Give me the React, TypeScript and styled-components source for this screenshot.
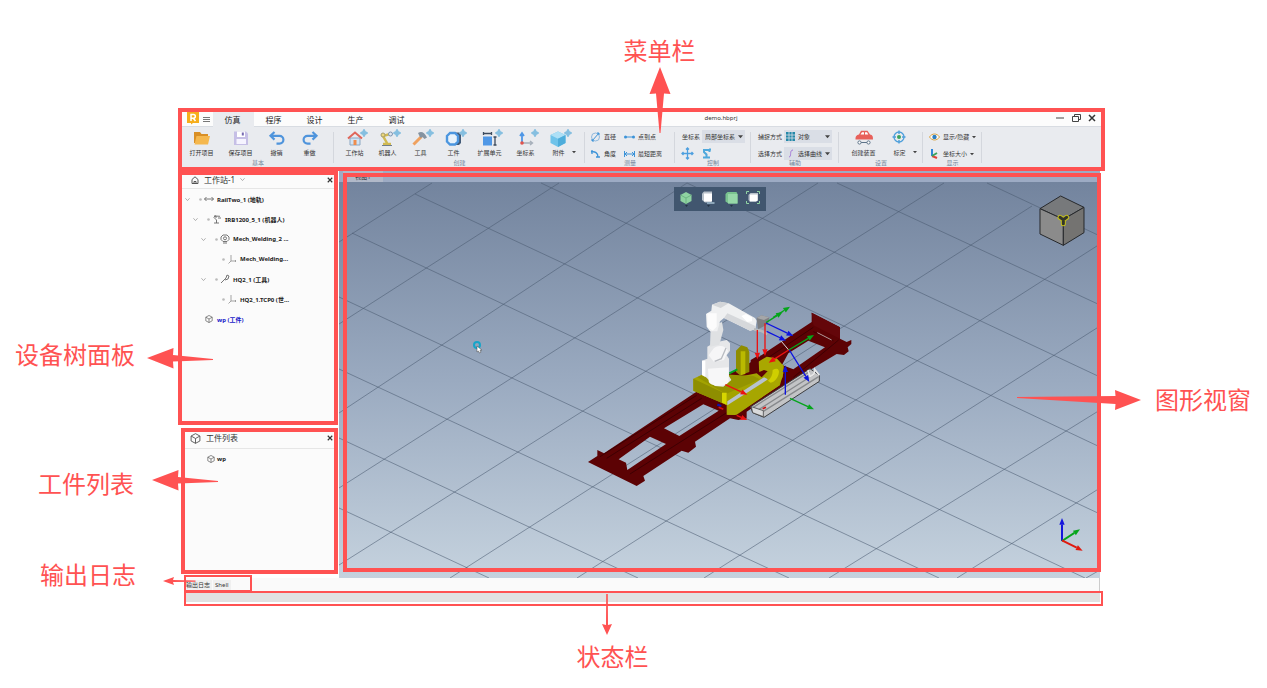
import React from "react";
import styled, { createGlobalStyle } from "styled-components";

const RED = "#ff5252";

const GlobalStyle = createGlobalStyle`
  * { box-sizing: border-box; }
  body {
    margin: 0;
    background: #fff;
    font-family: "Noto Sans", "Noto Sans CJK SC", sans-serif;
    color: #333;
  }
  button, select { font: inherit; color: inherit; border: 0; background: none; padding: 0; margin: 0; }
  svg { display: block; flex: none; overflow: visible; }
`;

/* ---------- page and callouts ---------- */

const Page = styled.main`
  display: grid;
  grid-template-columns: 178px minmax(0, 1fr) 162px;
  min-height: 100vh;
`;

const Notes = styled.aside`
  position: relative;
  z-index: 3;
  display: flex;
  flex-direction: column;
`;

const NoteText = styled.span`
  font-size: 24px;
  line-height: 32px;
  color: ${RED};
  white-space: nowrap;
`;

const Note = styled.div<{ $top: number; $left: number; $gap: number }>`
  display: flex;
  align-items: center;
  gap: ${(p) => p.$gap}px;
  margin-top: ${(p) => p.$top}px;
  margin-left: ${(p) => p.$left}px;
`;

const TopNote = styled.div`
  position: relative;
  z-index: 3;
  height: 108px;
  padding: 35px 0 0 36px;
  display: flex;
  flex-direction: column;
  align-items: center;
`;

const BottomNote = styled.div`
  position: relative;
  z-index: 3;
  margin-top: -12px;
  padding-right: 58px;
  display: flex;
  flex-direction: column;
  align-items: center;
  gap: 6px;

  svg { margin-right: 12px; }
`;

const Column = styled.div`
  display: flex;
  flex-direction: column;
  min-width: 0;
`;

/* ---------- ribbon ---------- */

const Ribbon = styled.header`
  position: relative;
  z-index: 2;
  border: 4px solid ${RED};
  background: #e9ebef;
`;

const TitleBar = styled.div`
  display: flex;
  align-items: stretch;
  height: 15px;
  padding-left: 5px;
  background: #fcfcfc;
  border-bottom: 1px solid #d8dce2;
`;

const MenuButton = styled.button`
  display: grid;
  place-items: center;
  width: 14px;
  padding-top: 2px;
`;

const Tabs = styled.nav`
  display: flex;
  margin-bottom: -1px;
`;

const Tab = styled.button<{ $active?: boolean }>`
  width: 41px;
  font-size: 8px;
  line-height: 14px;
  padding: 1px 2px 0 0;
  color: #222;
  background: ${(p) => (p.$active ? "#e9ebef" : "transparent")};
`;

const DocTitle = styled.div`
  flex: 1;
  padding-right: 28px;
  text-align: center;
  font-size: 6px;
  line-height: 13px;
`;

const WindowButtons = styled.div`
  display: flex;
  margin-right: 1px;

  button { width: 16px; display: grid; place-items: center; padding-bottom: 2px; }
`;

const Groups = styled.div`
  display: flex;
  height: 40px;
`;

const Group = styled.section<{ $w: number }>`
  position: relative;
  width: ${(p) => p.$w}px;
  flex: none;
  display: flex;
  flex-direction: column;

  &::after {
    content: "";
    position: absolute;
    right: 0;
    top: 5px;
    bottom: 4px;
    width: 1px;
    background: #d4d7dd;
  }
`;

const Tools = styled.div<{ $pad?: number }>`
  display: flex;
  height: 32px;
  padding-left: ${(p) => p.$pad ?? 0}px;
`;

const Caption = styled.h2`
  margin: 0;
  font-size: 6px;
  line-height: 8px;
  font-weight: 400;
  text-align: center;
  color: #75879c;
`;

const BigTool = styled.button<{ $wide?: boolean }>`
  width: ${(p) => (p.$wide ? 39 : 33)}px;
  display: flex;
  flex-direction: column;
  align-items: center;
  gap: 2px;
  padding-top: 3px;
  font-size: 6px;
  line-height: 8px;
  white-space: nowrap;
`;

const CaretButton = styled.button`
  align-self: flex-end;
  width: 6px;
  height: 14px;
  margin-left: -4px;
  display: grid;
  place-items: center;
`;

const Lines = styled.div<{ $cols: string; $pad: number }>`
  display: grid;
  grid-template-columns: ${(p) => p.$cols};
  grid-template-rows: 13px 13px;
  row-gap: 4px;
  height: 32px;
  padding: 3px 0 0 ${(p) => p.$pad}px;
  align-items: center;
`;

const SmallTool = styled.button`
  display: flex;
  align-items: center;
  gap: 3px;
  font-size: 6px;
  line-height: 12px;
  white-space: nowrap;
`;

const FieldLabel = styled.label`
  font-size: 6px;
  line-height: 12px;
  white-space: nowrap;
`;

const Field = styled.div`
  position: relative;
  display: flex;
  align-items: center;
  height: 13px;
  background: #dadee6;

  > svg { position: absolute; pointer-events: none; }
  > svg:first-child { left: 2px; }
  > svg:last-child { right: 2px; }
`;

const Select = styled.select<{ $icon?: boolean }>`
  appearance: none;
  width: 100%;
  height: 13px;
  padding-left: ${(p) => (p.$icon ? 14 : 3)}px;
  font-size: 6px;
  line-height: 12px;
`;

/* ---------- work area ---------- */

const Work = styled.div`
  display: flex;
  padding-right: 5px;
`;

const Sidebar = styled.div`
  width: 161px;
  flex: none;
  padding-right: 1px;
  padding-bottom: 4px;
  display: flex;
  flex-direction: column;
  gap: 3px;
`;

const Panel = styled.section<{ $h: number; $inset?: boolean }>`
  border: 4px solid ${RED};
  background: #fbfbfb;
  min-height: ${(p) => p.$h}px;
  margin-left: ${(p) => (p.$inset ? 3 : 0)}px;
`;

const PanelHead = styled.div<{ $h: number; $pad: number }>`
  display: flex;
  align-items: center;
  gap: 5px;
  height: ${(p) => p.$h}px;
  padding: 0 1px 4px ${(p) => p.$pad}px;
  border-bottom: 1px solid #e6e6e6;
  font-size: 8px;
  line-height: 10px;

  h2 { margin: 0; font: inherit; }
  button:last-child { margin-left: auto; }
`;

const Tree = styled.ul`
  list-style: none;
  margin: 0;
  padding: 0;
`;

const Row = styled.li<{ $level: number; $link?: boolean }>`
  display: flex;
  align-items: center;
  height: 20px;
  padding-left: ${(p) => 1 + p.$level * 8}px;
  font-size: 6px;
  font-weight: 700;
  white-space: nowrap;
  color: ${(p) => (p.$link ? "#1616c8" : "#222")};
`;

const Slot = styled.span<{ $w: number; $gap?: number }>`
  width: ${(p) => p.$w}px;
  margin-right: ${(p) => p.$gap ?? 0}px;
  flex: none;
  display: grid;
  place-items: center;
`;

const ListRow = styled(Row)`
  padding-left: 19px;
`;

const Viewport = styled.section`
  position: relative;
  flex: 1;
  min-width: 0;
  display: flex;
  flex-direction: column;
`;

const ViewTabs = styled.div`
  height: 11px;
  background: #9dabc4;
  padding-left: 4px;
`;

const ViewTab = styled.button`
  width: 40px;
  height: 11px;
  background: #b1b9c9;
  font-size: 6px;
  line-height: 12px;
  display: block;
`;

const Scene = styled.div`
  position: relative;
  flex: 1;
  overflow: hidden;
  background: linear-gradient(#73849e, #9aaac0 50%, #c5d2de);

  > svg { position: absolute; inset: 0; width: 100%; height: 100%; }
`;

const ViewTools = styled.div`
  position: absolute;
  top: 5px;
  left: 50%;
  margin-left: -46px;
  width: 92px;
  height: 24px;
  padding: 0 1px;
  display: flex;
  background: #41566f;

  button { flex: 1; display: grid; place-items: center; }
`;

const ViewFrame = styled.div`
  position: absolute;
  top: 2px;
  left: 4px;
  right: -1px;
  bottom: 6px;
  border: 4px solid ${RED};
  pointer-events: none;
`;

const LogBar = styled.div`
  margin: 0 5px 0 6px;
  height: 13px;
  background: #fafafa;
  border-right: 1px solid #ccc;
`;

const LogTabs = styled.div`
  position: relative;
  width: 68px;
  height: 17px;
  top: -3px;
  border: 2px solid ${RED};
  display: flex;
  align-items: flex-end;
  gap: 1px;
`;

const LogTab = styled.button`
  height: 10px;
  padding: 0 2px 0 0;
  font-size: 6px;
  line-height: 8px;
  background: #f0f0f0;
  white-space: nowrap;

  & + & { padding: 0 2px; }
`;

const StatusBar = styled.footer`
  position: relative;
  margin: 0 2px 0 6px;
  height: 15px;
  border: 2px solid ${RED};
  background: #fff;

  &::before {
    content: "";
    display: block;
    height: 9px;
    margin-right: 1px;
    background: #e1e1e1;
  }
`;

/* ---------- small drawings ---------- */

const Caret = ({ size = 5 }: { size?: number }) => (
  <svg width={size} height={size} viewBox="0 0 6 6"><path d="M0 1.5h6L3 5z" fill="#444" /></svg>
);

const Chevron = () => (
  <svg width="5" height="5" viewBox="0 0 6 6"><path d="M.5 1.5 3 4.3l2.500-2.800" fill="none" stroke="#999" strokeWidth=".9" /></svg>
);

const Plus = () => <path d="M18 0c.4 2 1 2.600 3 3-2 .4-2.600 1-3 3-.4-2-1-2.600-3-3 2-.4 2.600-1 3-3z" fill="#86bfe0" stroke="#86bfe0" strokeWidth="1.800" strokeLinejoin="round" />;

type Name =
  | "folder" | "save" | "undo" | "redo" | "home" | "robot" | "hammer" | "part" | "ext" | "axis" | "box"
  | "car" | "target";

const shapes: Record<Name, React.ReactNode> = {
  folder: <><path d="M1 2h6l1.500 2H15V13H1z" fill="#d98f26" /><path d="M3.500 6H17l-2 8.500H1.500z" fill="#f5b84f" /></>,
  save: <><path d="M2 1.500h12l2 2V15H2z" fill="#c6bfe6" /><path d="M5 1.500h8v5.500H5z" fill="#fff" /><path d="M9.800 2.500h2v3h-2z" fill="#7568b0" /><path d="M4.500 9h9.500v5H4.500z" fill="#f6f4ff" /></>,
  undo: <path d="M6.500 2 2.500 5.800l4 3.800M2.500 5.800h9a3.900 3.900 0 0 1 0 7.800H8.500" fill="none" stroke="#4f94dc" strokeWidth="2.200" />,
  redo: <path d="m11.500 2 4 3.800-4 3.800M15.500 5.800h-9a3.900 3.900 0 0 0 0 7.800h3" fill="none" stroke="#4f94dc" strokeWidth="2.200" />,
  home: <><path d="M4 8h10v7H4z" fill="#cfe3f4" stroke="#8ba7c2" /><path d="M2 8.500 9 2.500l7 6" fill="none" stroke="#e0665a" strokeWidth="2" /><path d="M7.500 10h3v5h-3z" fill="#ef8d4c" /><Plus /></>,
  robot: <><path d="M4 14h8M8 13 4 6l7-2" fill="none" stroke="#d0ba52" strokeWidth="2.500" /><circle cx="4" cy="5" r="2" fill="#ead67a" stroke="#a59c70" /><circle cx="11.500" cy="4" r="2" fill="#dfe6ef" stroke="#7c93b1" /><path d="M3 15.500h10" stroke="#6f7d8c" /><Plus /></>,
  hammer: <><path d="m1.500 14.500 8-8" stroke="#efa15f" strokeWidth="3" /><path d="M6 3c3-2 6-1.500 9 4.500l-2.500 1.500-2-2-2 1z" fill="#8593a1" /><Plus /></>,
  part: <><path d="M8 2.500h6l2 2V13l-2 2H8z" fill="#435b78" /><path d="M5 3 2 6v5.500l3 3h5l3-3V6l-3-3z" fill="#e8f2fb" stroke="#4c96df" strokeWidth="2.400" /><Plus /></>,
  ext: <><path d="M2 6.500h9V15.500H2z" fill="#4f97e6" /><path d="M2 3.500h9M2.500 2v3M10.500 2v3M14 6.500v9M12.500 7h3M12.500 15h3" stroke="#3c4a5c" fill="none" strokeWidth="1.300" /><Plus /></>,
  axis: <><path d="M5 13V4M3 6l2-3 2 3" fill="none" stroke="#4f97e6" strokeWidth="1.800" /><path d="M5 13h10M13 11l2.500 2-2.500 2" fill="none" stroke="#a7b0bb" strokeWidth="1.400" /><circle cx="5" cy="13" r="1.800" fill="#e0534f" /><Plus /></>,
  box: <><path d="m8 1.500 7.500 3.500v8L8 17 .5 13V5z" fill="#6fc3ea" /><path d="m8 1.500 7.500 3.500L8 8.800.5 5z" fill="#aee0f6" /><path d="M8 8.800V17l7.500-4V5z" fill="#4eaddb" /><Plus /></>,
  car: <><path d="M.5 9.500c0-3.500 1-4.500 3.500-5L6 .8h6.500L15 4.500c2.500.5 3 1.500 3 5z" fill="#e8605a" /><path d="M5.500 4.500 7 2.200h2v2.300zM10 4.500V2.200h2l1.300 2.300z" fill="#fff" /><path d="M4 12.500h10" stroke="#5d7389" /><circle cx="4.500" cy="12.500" r="1.600" fill="#fff" stroke="#5d7389" /><circle cx="13.500" cy="12.500" r="1.600" fill="#fff" stroke="#5d7389" /></>,
  target: <><circle cx="8" cy="7" r="5" fill="none" stroke="#4d9fdb" strokeWidth="1.300" /><circle cx="8" cy="7" r="2" fill="#3aa35b" /><path d="M8 .5v3.500M8 10v3.500M1.500 7H5M11 7h3.500" stroke="#4d9fdb" strokeWidth="1.400" /></>,
};

const Icon = ({ name }: { name: Name }) => (
  <svg width="18" height="17" viewBox="0 0 18 17">{shapes[name]}</svg>
);

const Close = ({ size = 8 }: { size?: number }) => (
  <svg width={size} height={size} viewBox="0 0 8 8"><path d="m1 1 6 6M7 1 1 7" stroke="#333" strokeWidth="1.500" /></svg>
);

const CubeIcon = ({ size = 8 }: { size?: number }) => (
  <svg width={size} height={size} viewBox="0 0 12 12">
    <path d="m6 .7 4.800 2.600v5.400L6 11.300 1.200 8.700V3.300zM1.200 3.300 6 6l4.800-2.700M6 6v5.300" fill="none" stroke="#555" strokeWidth="1" />
  </svg>
);

const RowIcon = ({ kind }: { kind: string }) => (
  <svg width="10" height="10" viewBox="0 0 10 10" fill="none" stroke="#666" strokeWidth=".9">
    {kind === "rail" && <path d="M.5 5h9M2.500 3l-2 2 2 2M7.500 3l2 2-2 2" />}
    {kind === "robot" && <path d="M2 9h5M4.500 9V6L2 3.500 3 2l5 .3M6 4h3M2 2h2v2" />}
    {kind === "mech" && <><path d="M3 1h4l2 2v2.500l-2 2H3l-2-2V3zM3 9h4" /><circle cx="5" cy="4.300" r="1.500" /></>}
    {kind === "frame" && <path d="M4 1v6h5M4 7 1.500 9.500M8 6l1 1-1 1" stroke="#999" />}
    {kind === "tool" && <path d="m1 9 5-5 1-3 2 1-1 3-3 1" />}
  </svg>
);

/* ---------- 3D scene ---------- */

const gridLines: number[][] = [
  [93, 1, 0, 60], [220, 1, 0, 142], [348, 1, 0, 231], [479, 1, 0, 306], [605, 1, 0, 383], [693, 24, 111, 396],
  [761, 62, 238, 396], [761, 144, 365, 396], [761, 228, 490, 396], [761, 306, 618, 396], [761, 388, 747, 396],
  [648, 1, 761, 54], [498, 1, 761, 123], [348, 1, 761, 195], [202, 1, 761, 265], [76, 12, 761, 332],
  [13, 51, 746, 396], [0, 115, 600, 396], [0, 187, 450, 396], [0, 256, 299, 396], [0, 326, 150, 396],
];

const Arrow3D = ({ from, to, color, w = 4 }: { from: [number, number]; to: [number, number]; color: string; w?: number }) => {
  const [x1, y1] = from;
  const [x2, y2] = to;
  const len = Math.hypot(x2 - x1, y2 - y1);
  const ux = (x2 - x1) / len;
  const uy = (y2 - y1) / len;
  const bx = x2 - ux * 20;
  const by = y2 - uy * 20;
  return (
    <>
      <path d={`M${x1} ${y1}L${bx} ${by}`} stroke={color} strokeWidth={w} />
      <path d={`M${x2} ${y2}L${bx - uy * 8} ${by + ux * 8}L${bx + uy * 8} ${by - ux * 8}z`} fill={color} />
    </>
  );
};

const SceneDrawing = () => (
  <svg viewBox="0 0 761 396" preserveAspectRatio="xMidYMid slice" role="img" aria-label="机器人工作站">
    <g stroke="#4b5b70" strokeOpacity=".62" strokeWidth=".9">
      {gridLines.map(([x1, y1, x2, y2]) => <line key={`${x1}-${y1}-${x2}`} x1={x1} y1={y1} x2={x2} y2={y2} />)}
    </g>

    <g transform="translate(241 108) scale(.33333)">
      {/* rail */}
      <path
        fillRule="evenodd"
        fill="#5c0204"
        d="M24 516 52 498V480L72 490 345 308 515 215 695 96V68L780 112V146L800 156 814 150V162L803 172 806 184 792 195 770 192 640 270 500 365 500 385 475 390 450 385 345 455 348 470 325 488 305 482 190 558 195 572 170 588z
           M116 508 210 440 258 462 142 540 138 518z M252 415 370 343 416 362 298 438z M625 190 685 152 735 172 640 238 606 225z"
      />
      <path d="M60 500 350 316M80 505 365 325M150 552 440 368M640 262 776 150M560 206 700 112M700 125 760 152" stroke="#3d0002" strokeWidth="3" fill="none" />
      <path d="M695 68 780 112V146L700 106z" fill="#64060a" />
      <path d="M712 128 755 150" stroke="#b99a9a" strokeWidth="3" />

      {/* carriage */}
      <path d="M340 266 375 250 470 262 530 250 545 262 590 215 610 225V250L600 285 470 374 440 374V345L420 336 340 302z" fill="#a3a300" />
      <path d="M340 266 425 306 440 312V345L340 302z" fill="#8e8e00" />
      <path d="M352 262 380 250 520 258 540 268 438 312z" fill="#949400" />
      <path d="M426 308h14v36l-14-6z" fill="#d6d600" />
      <path d="M442 342 585 250 600 285 465 375 442 374z" fill="#a7a600" />
      <path d="m442 334 110-72 12 6-122 78z" fill="#b7c2cf" />
      <path d="M535 215 560 200 590 205 611 228 608 262 590 290 562 275 568 245 552 240 538 246z" fill="#a9a700" />
      <path d="M578 240c14-8 22-2 18 12s-12 24-24 26l-8-6c10-8 14-18 14-32z" fill="#cfcf00" />
      <path d="m468 182 16-16 18 6 6 14v60l-28 10-12-10z" fill="#8f8d00" />
      <path d="M482 184h14v68l-14 4z" fill="#bab900" />
      <path d="M512 210 536 196 536 246 512 250z" fill="#5c0204" />
      <path d="M448 250 472 238" stroke="#00a81c" strokeWidth="6" />

      {/* arm */}
      <path d="M366 212 382 206V170L402 158 440 150 450 160V182L440 196 447 206V258L454 270 430 290 405 288 378 262 366 256z" fill="#e6e7e9" />
      <path d="M384 236 446 232V272C446 292 386 292 386 272z" fill="#f7f7f8" />
      <path d="M366 212h10v48l-10-6z" fill="#fff" />
      <path d="M392 110 426 96 430 120 418 164 390 170z" fill="#dfe1e3" />
      <path d="M400 176c14-14 40-8 44 8l-12 26-30 6-16-20z" fill="#f6f6f7" />
      <path d="m404 214 20-8 14-32" stroke="#b9bcc1" strokeWidth="4" fill="none" />
      <path d="M378 72 394 62 396 44 420 35 446 40 525 84 530 92 526 118 510 122 432 84 420 94 412 124 390 124 380 110z" fill="#eff0f1" />
      <path d="M382 70h28v40l-12 12-16-12z" fill="#fcfcfc" />
      <path d="m432 84 78 38 16-4v-10l-84-38z" fill="#d6d8db" />
      <path d="m396 44 26 10 24-14-26-5z" fill="#d3d5d8" />
      <path d="m484 78 14-6 18 10v12l-14 2z" fill="#fff" />
      <path d="m530 84 14-8 24 6-4 20-30 16z" fill="#7d7f82" />
      <path d="m530 84 14-8 24 6-16 8z" fill="#a5a6a8" />
      <path d="m522 118 20 4 20 10" stroke="#b7b9bb" strokeWidth="8" fill="none" />

      {/* work piece */}
      <path d="M512 350 690 236 718 256V274L552 382 518 368z" fill="#c3c4c6" stroke="#3d3d3f" strokeWidth="3" />
      <path d="M520 352 690 244M534 360 704 252M550 364 716 260" stroke="#87898c" strokeWidth="4" />
      <path d="M514 350 550 362V380L518 368z" fill="#d9dadb" stroke="#2d2d2f" strokeWidth="2" />
      <path d="m684 240 6 20 12-8 2-14 14 18" fill="none" stroke="#e8e8e8" strokeWidth="5" />

      {/* frames */}
      <Arrow3D from={[532, 120]} to={[532, 208]} color="#ec1111" />
      <Arrow3D from={[555, 100]} to={[555, 198]} color="#ec1111" />
      <Arrow3D from={[558, 98]} to={[608, 66]} color="#05a51a" />
      <Arrow3D from={[580, 82]} to={[630, 50]} color="#05a51a" />
      <Arrow3D from={[558, 99]} to={[640, 138]} color="#0c12e0" />
      <Arrow3D from={[560, 124]} to={[618, 152]} color="#0c12e0" />
      <path d="m604 154 22 26" stroke="#ddd" strokeWidth="3" />
      <Arrow3D from={[626, 180]} to={[702, 135]} color="#05a51a" />
      <Arrow3D from={[626, 180]} to={[566, 218]} color="#ec1111" />
      <Arrow3D from={[628, 180]} to={[688, 276]} color="#0c12e0" />
      <Arrow3D from={[616, 314]} to={[616, 226]} color="#0c12e0" />
      <Arrow3D from={[630, 325]} to={[702, 358]} color="#05a51a" />
      <Arrow3D from={[436, 284]} to={[502, 314]} color="#ec1111" />
      <Arrow3D from={[470, 376]} to={[502, 390]} color="#ec1111" />
      <path d="m412 344 12 4" stroke="#0c12b0" strokeWidth="7" />
      <path d="m416 352 14 6M548 356l10-4" stroke="#d01010" strokeWidth="5" />
    </g>

    {/* pointer */}
    <circle cx="138" cy="163" r="3" fill="none" stroke="#16a5c9" strokeWidth="2" />
    <path d="m138 164 0 6 1.500-1 1 2 1.500-.8-1-2h2z" fill="#fff" stroke="#444" strokeWidth=".5" />
  </svg>
);

const Overlays = () => (
  <svg viewBox="0 0 761 396" preserveAspectRatio="xMaxYMid slice" aria-hidden="true">
    <g transform="translate(661 -17) scale(.33333)" stroke="#26282b" strokeWidth="3" strokeLinejoin="round">
      <path d="M182 93 252 127 190 163 120 131z" fill="#77797b" />
      <path d="M120 131 190 163V241L120 207z" fill="#8b8b8b" />
      <path d="M252 127V203L190 241V163z" fill="#747371" />
      <path d="m180 157 10 7 10-7M190 164v12" stroke="#c5c01c" strokeWidth="15" strokeLinecap="round" fill="none" />
      <path d="m180 157 10 7 10-7M190 164v12" stroke="#333528" strokeWidth="9" strokeLinecap="round" fill="none" />
    </g>
    <g transform="translate(661 308) scale(.33333)">
      <Arrow3D from={[186, 153]} to={[186, 84]} color="#1515dc" w={6} />
      <Arrow3D from={[186, 153]} to={[240, 118]} color="#05a51a" w={6} />
      <Arrow3D from={[186, 151]} to={[248, 182]} color="#e01a10" w={6} />
    </g>
  </svg>
);

const ViewCube = ({ kind }: { kind: number }) => (
  <svg width="16" height="18" viewBox="0 1 16 18">
    {kind === 0 && <><path d="m8 3 5.500 3v6L8 15l-5.500-3V6z" fill="#8fd3a2" /><path d="M2.500 6 8 9l5.500-3M8 9v6" stroke="#6db583" fill="none" /></>}
    {kind === 1 && <><path d="m2 4.500 2-2h8V12l-1.500 1.500H5L2 11z" fill="#b9c2cb" /><path d="M4 4.500h8v8H4z" fill="#fff" /><path d="M7 13h7.500v2H7z" fill="#8ca6b9" /></>}
    {kind === 2 && <><path d="m2.500 5 2-2h9l1 2v9.500h-9l-3-2z" fill="#79c38f" /><path d="M5 5h9.500v9.500H5z" fill="#97d8a9" /></>}
    {kind === 3 && <><path d="M1.500 5V2.500H4M12 2.500h2.500V5M14.500 12v2.500H12M4 14.500H1.500V12" stroke="#8fd3a2" fill="none" /><path d="m3.500 6 2-2H13v7l-2 2H5L3.500 11z" fill="#b9c2cb" /><path d="M5 5.500h7.500V12H5z" fill="#fff" /></>}
    {kind < 3 && <path d="M7 16.200h3l-1.500 1.500z" fill="#1d2937" />}
  </svg>
);

/* ---------- callout arrows ---------- */

const ArrowLeft = ({ raised }: { raised?: boolean }) => (
  <svg width="66" height="26" viewBox={raised ? "0 1 66 26" : "0 -6 66 26"}>
    <path d="M0 10 26.500 0 26 7 66 11v1L26 13.500l.5 7z" fill={RED} />
  </svg>
);

const ThinArrowLeft = () => (
  <svg width="33" height="20" viewBox="0 0 33 20">
    <path d="M0 16 11 12l-1 3 22.500.500v1.200L10 17l1 3z" fill={RED} />
  </svg>
);

/* ---------- data ---------- */

const tree = [
  { level: 0, open: true, icon: "rail", text: "RailTwo_1 (地轨)" },
  { level: 1, open: true, icon: "robot", text: "IRB1200_5_1 (机器人)" },
  { level: 2, open: true, icon: "mech", text: "Mech_Welding_2 ..." },
  { level: 3, open: false, icon: "frame", text: "Mech_Welding..." },
  { level: 2, open: true, icon: "tool", text: "HQ2_1 (工具)" },
  { level: 3, open: false, icon: "frame", text: "HQ2_1.TCP0 (世…" },
];

const createTools: { icon: Name; text: string; wide?: boolean }[] = [
  { icon: "home", text: "工作站" },
  { icon: "robot", text: "机器人" },
  { icon: "hammer", text: "工具" },
  { icon: "part", text: "工件" },
  { icon: "ext", text: "扩展单元", wide: true },
  { icon: "axis", text: "坐标系" },
  { icon: "box", text: "附件" },
];

export default function App() {
  return (
    <>
      <GlobalStyle />
      <Page>
        <Notes>
          <Note $top={339} $left={15} $gap={12}><NoteText>设备树面板</NoteText><ArrowLeft /></Note>
          <Note $top={97} $left={38} $gap={18}><NoteText>工件列表</NoteText><ArrowLeft raised /></Note>
          <Note $top={59} $left={40} $gap={27}><NoteText>输出日志</NoteText><ThinArrowLeft /></Note>
        </Notes>

        <Column>
          <TopNote>
            <NoteText>菜单栏</NoteText>
            <svg width="22" height="66" viewBox="0 0 22 66"><path d="m11 0 10.500 27-6.500-.5L11.500 66h-1L7 26.500.5 27z" fill={RED} /></svg>
          </TopNote>

          <Ribbon>
            <TitleBar>
              <svg width="12" height="12" viewBox="0 0 12 12">
                <path d="M0 0h12v11H6l-2 1.500V11H0z" fill="#f6ae1c" />
                <path d="M4 9V2.500h2.500a1.800 1.800 0 0 1 0 3.700H4M6.300 6.200 8.500 9" fill="none" stroke="#fff" strokeWidth="1.500" />
              </svg>
              <MenuButton aria-label="菜单"><svg width="7" height="6" viewBox="0 0 7 6"><path d="M0 .5h7M0 2.500h7M0 4.500h7" stroke="#777" /></svg></MenuButton>
              <Tabs>
                <Tab $active>仿真</Tab><Tab>程序</Tab><Tab>设计</Tab><Tab>生产</Tab><Tab>调试</Tab>
              </Tabs>
              <DocTitle>demo.hbprj</DocTitle>
              <WindowButtons>
                <button aria-label="最小化"><svg width="8" height="8" viewBox="0 0 8 8"><path d="M0 4h8" stroke="#444" /></svg></button>
                <button aria-label="还原"><svg width="9" height="8" viewBox="0 0 9 8"><path d="M.5 2.500h6v5h-6zM2.500 2.500v-2h6v5h-2" fill="none" stroke="#444" /></svg></button>
                <button aria-label="关闭"><Close /></button>
              </WindowButtons>
            </TitleBar>

            <Groups>
              <Group $w={152}>
                <Tools>
                  <BigTool $wide><Icon name="folder" />打开项目</BigTool>
                  <BigTool $wide><Icon name="save" />保存项目</BigTool>
                  <BigTool><Icon name="undo" />撤销</BigTool>
                  <BigTool><Icon name="redo" />重做</BigTool>
                </Tools>
                <Caption>基本</Caption>
              </Group>
              <Group $w={251}>
                <Tools $pad={4}>
                  {createTools.map((t) => <BigTool key={t.icon} $wide={t.wide}><Icon name={t.icon} />{t.text}</BigTool>)}
                  <CaretButton aria-label="更多附件"><Caret size={4} /></CaretButton>
                </Tools>
                <Caption>创建</Caption>
              </Group>
              <Group $w={90}>
                <Lines $cols="34px 1fr" $pad={5}>
                  <SmallTool><svg width="11" height="10" viewBox="0 0 11 10"><circle cx="5.500" cy="5" r="4" fill="none" stroke="#8fb9de" /><path d="m2 9 7-8M7 1h2v2M2 7v2h2" stroke="#3c93d8" fill="none" /></svg>直径</SmallTool>
                  <SmallTool><svg width="11" height="6" viewBox="0 0 11 6"><path d="M1 3h9" stroke="#3c93d8" /><circle cx="1.500" cy="3" r="1.500" fill="#3c93d8" /><circle cx="9.500" cy="3" r="1.500" fill="#3c93d8" /></svg>点到点</SmallTool>
                  <SmallTool><svg width="11" height="10" viewBox="0 0 11 10"><path d="M1 3c4-1 7 1 7 5M2 1v4M6 8h4" stroke="#3c93d8" fill="none" strokeWidth="1.300" /></svg>角度</SmallTool>
                  <SmallTool><svg width="11" height="6" viewBox="0 0 11 6"><path d="M.5 0v6M10.500 0v6M1 3h9M3 1 1 3l2 2M8 1l2 2-2 2" stroke="#3c93d8" fill="none" /></svg>最短距离</SmallTool>
                </Lines>
                <Caption>测量</Caption>
              </Group>
              <Group $w={76}>
                <Lines $cols="20px 43px" $pad={7}>
                  <FieldLabel htmlFor="frame">坐标系</FieldLabel>
                  <Field>
                    <Select id="frame"><option>局部坐标系</option></Select>
                    <Caret />
                  </Field>
                  <SmallTool aria-label="移动"><svg width="11" height="11" viewBox="0 0 11 11"><path d="M5.500 0v11M0 5.500h11M4 1.500 5.500 0 7 1.500M4 9.500 5.500 11 7 9.500M1.500 4 0 5.500 1.500 7M9.500 4 11 5.500 9.500 7" stroke="#4d9fdf" fill="none" strokeWidth="1.300" /></svg></SmallTool>
                  <SmallTool aria-label="机器人控制"><svg width="10" height="11" viewBox="0 0 10 11"><path d="M1 9.500h7M4.500 9.500V6.500L2 4V2h5.500v2M7 1.500h2" stroke="#4fa8dc" strokeWidth="2" fill="none" /></svg></SmallTool>
                </Lines>
                <Caption>控制</Caption>
              </Group>
              <Group $w={88}>
                <Lines $cols="26px 48px" $pad={7}>
                  <FieldLabel htmlFor="snap">捕捉方式</FieldLabel>
                  <Field>
                    <svg width="9" height="9" viewBox="0 0 9 9"><path d="M0 0h9v9H0z" fill="#2488a8" /><path d="M3 0v9M6 0v9M0 3h9M0 6h9" stroke="#dadee6" strokeWidth=".8" /></svg>
                    <Select id="snap" $icon><option>对象</option></Select>
                    <Caret />
                  </Field>
                  <FieldLabel htmlFor="pick">选择方式</FieldLabel>
                  <Field>
                    <svg width="9" height="9" viewBox="0 0 9 9"><path d="M3 8c3 0 0-7 4-7" stroke="#a57bd8" fill="none" /></svg>
                    <Select id="pick" $icon><option>选择曲线</option></Select>
                    <Caret />
                  </Field>
                </Lines>
                <Caption>辅助</Caption>
              </Group>
              <Group $w={84}>
                <Tools $pad={5}>
                  <BigTool $wide><Icon name="car" />创建装置</BigTool>
                  <BigTool><Icon name="target" />标定</BigTool>
                  <CaretButton aria-label="更多标定"><Caret size={4} /></CaretButton>
                </Tools>
                <Caption>设置</Caption>
              </Group>
              <Group $w={59}>
                <Lines $cols="1fr" $pad={6}>
                  <SmallTool><svg width="11" height="8" viewBox="0 0 11 8"><path d="M.5 4C3 0 8 0 10.500 4 8 8 3 8 .5 4z" fill="#fff" stroke="#d9a440" /><circle cx="5.500" cy="4" r="2.200" fill="#2d7fc0" /></svg>显示/隐藏<Caret size={4} /></SmallTool>
                  <SmallTool><svg width="11" height="10" viewBox="0 0 11 10"><path d="M3 7V0" stroke="#2f86d8" strokeWidth="2" /><path d="m3 7 5 2" stroke="#e0433b" strokeWidth="2" /><path d="m3 7 5-3" stroke="#3aa35b" strokeWidth="2" /></svg>坐标大小<Caret size={4} /></SmallTool>
                </Lines>
                <Caption>显示</Caption>
              </Group>
            </Groups>
          </Ribbon>

          <Work>
            <Sidebar>
              <Panel $h={254}>
                <PanelHead $h={14} $pad={9}>
                  <svg width="8" height="8" viewBox="0 0 8 8"><path d="M1 3.500 4 .8l3 2.700v4H1zM3 7.500v-2h2v2" fill="none" stroke="#444" strokeWidth=".9" /></svg>
                  <h2>工作站-1</h2>
                  <button aria-label="切换工作站"><Chevron /></button>
                  <button aria-label="关闭"><Close size={6} /></button>
                </PanelHead>
                <Tree>
                  {tree.map((n) => (
                    <Row key={n.text} $level={n.level}>
                      {n.level < 3 ? <Slot $w={8} $gap={5}>{n.open && <Chevron />}</Slot> : <Slot $w={8} $gap={4} />}
                      <Slot $w={8}><svg width="3" height="3" viewBox="0 0 3 3"><circle cx="1.500" cy="1.500" r="1.300" fill="#bbb" /></svg></Slot>
                      <Slot $w={10} $gap={3}><RowIcon kind={n.icon} /></Slot>
                      {n.text}
                    </Row>
                  ))}
                  <ListRow $level={0} $link>
                    <Slot $w={16}><CubeIcon /></Slot>
                    wp (工件)
                  </ListRow>
                </Tree>
              </Panel>
              <Panel $h={146} $inset>
                <PanelHead $h={17} $pad={5}>
                  <CubeIcon size={11} />
                  <h2>工件列表</h2>
                  <button aria-label="关闭"><Close size={6} /></button>
                </PanelHead>
                <Tree>
                  <ListRow $level={0}>
                    <Slot $w={13}><CubeIcon /></Slot>
                    wp
                  </ListRow>
                </Tree>
              </Panel>
            </Sidebar>

            <Viewport>
              <ViewTabs><ViewTab>视图1</ViewTab></ViewTabs>
              <Scene>
                <SceneDrawing />
                <Overlays />
                <ViewTools>
                  {["等轴视图", "视图方向", "显示样式", "适合窗口"].map((label, i) => (
                    <button key={label} aria-label={label}><ViewCube kind={i} /></button>
                  ))}
                </ViewTools>
              </Scene>
              <ViewFrame />
            </Viewport>
          </Work>

          <LogBar>
            <LogTabs>
              <LogTab>输出日志</LogTab>
              <LogTab>Shell</LogTab>
            </LogTabs>
          </LogBar>
          <StatusBar />

          <BottomNote>
            <svg width="10" height="41" viewBox="0 0 10 41"><path d="M4.200 0h1.600L6 31l4-1-5 11L0 30l4 1z" fill={RED} /></svg>
            <NoteText>状态栏</NoteText>
          </BottomNote>
        </Column>

        <Notes>
          <Note $top={384} $left={-88} $gap={14}>
            <svg width="124" height="22" viewBox="0 0 124 22"><path d="M124 11 98 21l.5-6L0 9V8l98.500-1-.5-6z" fill={RED} /></svg>
            <NoteText>图形视窗</NoteText>
          </Note>
        </Notes>
      </Page>
    </>
  );
}
